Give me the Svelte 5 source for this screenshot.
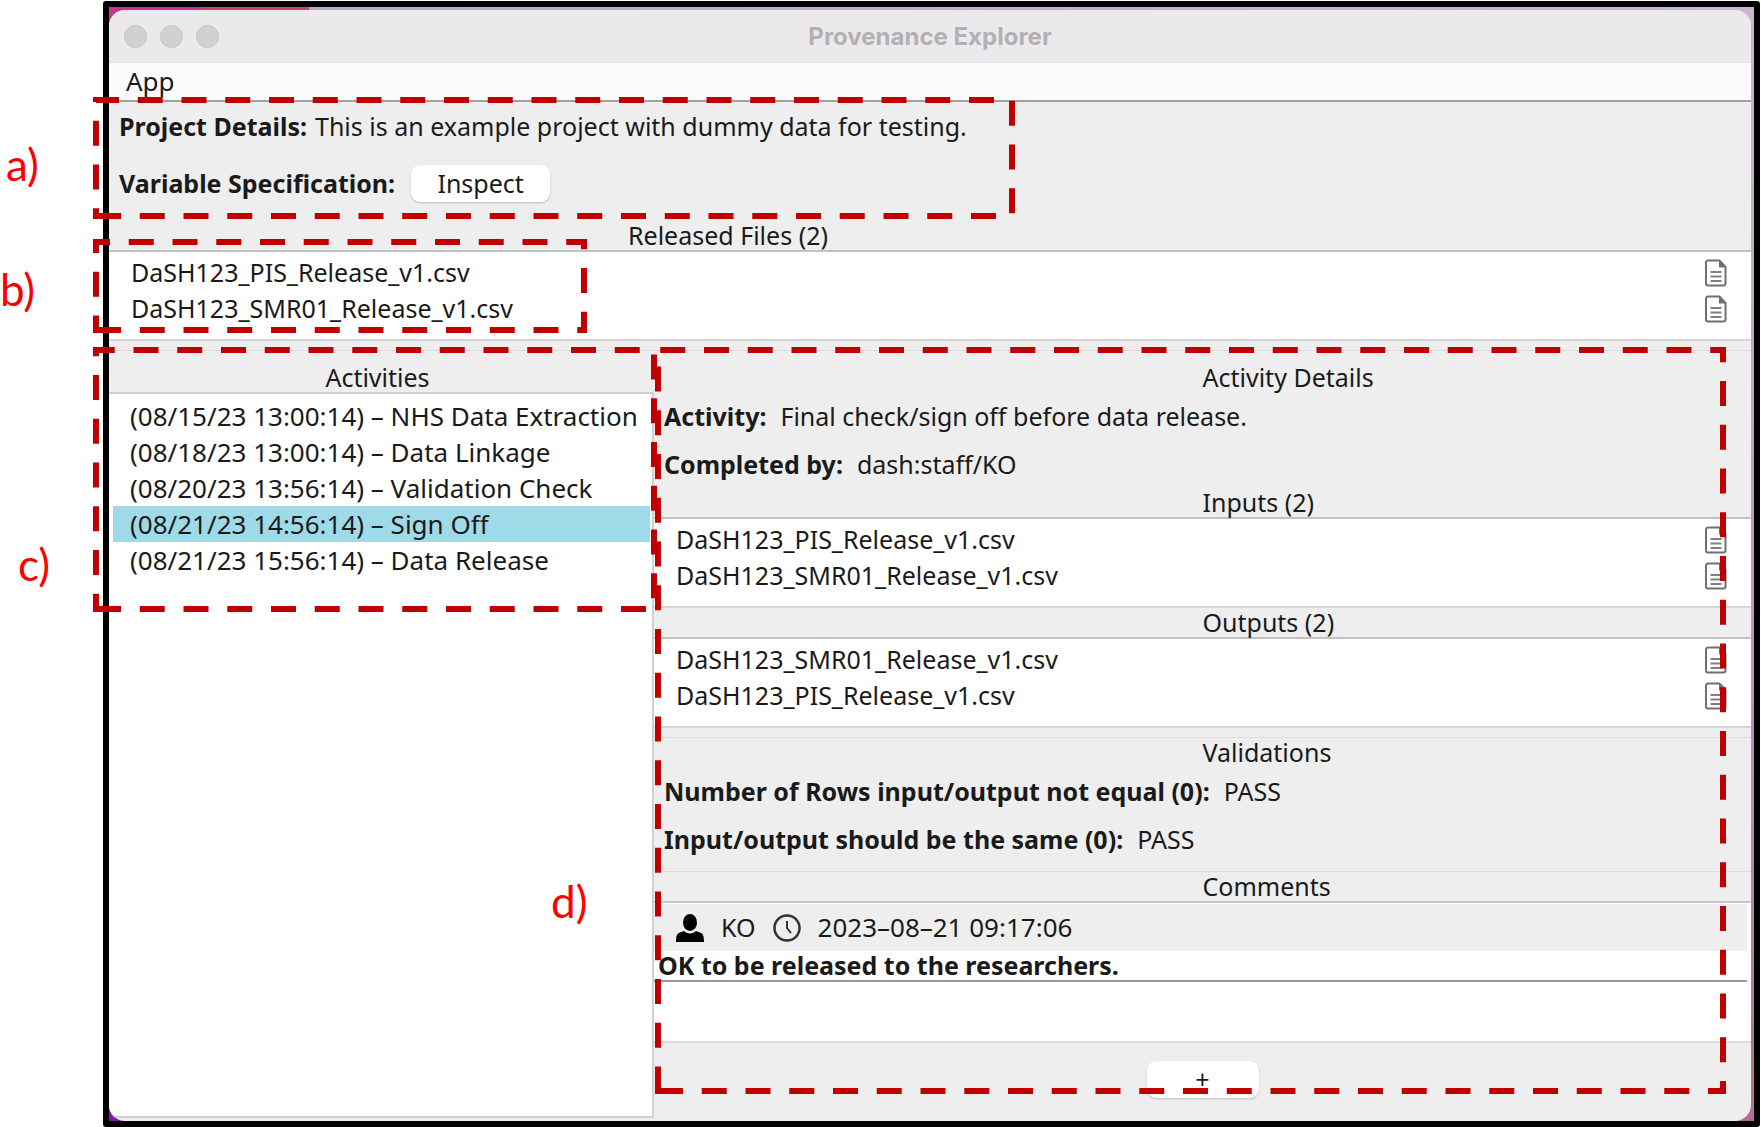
<script>
    const files = {
        pis: 'DaSH123_PIS_Release_v1.csv',
        smr: 'DaSH123_SMR01_Release_v1.csv'
    };

    const activities = [
        { time: '08/15/23 13:00:14', name: 'NHS Data Extraction' },
        { time: '08/18/23 13:00:14', name: 'Data Linkage' },
        { time: '08/20/23 13:56:14', name: 'Validation Check' },
        { time: '08/21/23 14:56:14', name: 'Sign Off' },
        { time: '08/21/23 15:56:14', name: 'Data Release' }
    ];

    const validations = [
        { name: 'Number of Rows input/output not equal (0):', result: 'PASS' },
        { name: 'Input/output should be the same (0):', result: 'PASS' }
    ];

    // callout outlines, drawn from the bottom left corner
    const outlines = [
        'M96 216 H1012 V100 H96 Z',
        'M96 330 H584 V242 H96 Z',
        'M96 609 H654 V350 H96 Z',
        'M658 1091 H1723 V350 H658 Z'
    ];

    let selected = $state(3);
</script>

{#snippet fileList(names)}
    <ul class="files">
        {#each names as name}
            <li>
                <span>{name}</span>
                <button class="doc" type="button" aria-label="Open {name}">
                    <svg width="22" height="28" viewBox="0 0 22 28">
                        <path d="M3 1.5h11.5l6 6.5v16.500a2 2 0 0 1-2 2h-15.500a2 2 0 0 1-2-2v-21a2 2 0 0 1 2-2z" fill="#fff" stroke="#707070" stroke-width="2" />
                        <path d="M14 1v7.500h7z" fill="#707070" />
                        <path d="M5.500 13h11M5.500 17.500h11M5.500 22h11" stroke="#808080" stroke-width="2" />
                    </svg>
                </button>
            </li>
        {/each}
    </ul>
{/snippet}

<main>
    <div class="frame">
        <div class="window">
            <header class="titlebar">
                <div class="lights">
                    <span></span>
                    <span></span>
                    <span></span>
                </div>
                <h1>Provenance Explorer</h1>
            </header>
            <nav class="menubar">
                <button type="button">App</button>
            </nav>

            <section class="project">
                <p class="line"><b>Project Details:</b> This is an example project with dummy data for testing.</p>
                <div class="line variable">
                    <b>Variable Specification:</b>
                    <button class="btn inspect" type="button">Inspect</button>
                </div>
            </section>

            <h2 class="released">Released Files (2)</h2>
            {@render fileList([files.pis, files.smr])}

            <div class="split">
                <section class="left">
                    <h2 class="top">Activities</h2>
                    <div class="activities">
                        {#each activities as activity, i}
                            <button type="button" class:selected={selected === i} onclick={() => (selected = i)}>
                                ({activity.time}) – {activity.name}
                            </button>
                        {/each}
                    </div>
                </section>

                <section class="right">
                    <h2 class="top">Activity Details</h2>
                    <p class="line wide"><b>Activity:</b><span>Final check/sign off before data release.</span></p>
                    <p class="line wide"><b>Completed by:</b><span>dash:staff/KO</span></p>

                    <h2>Inputs (2)</h2>
                    {@render fileList([files.pis, files.smr])}

                    <h2>Outputs (2)</h2>
                    {@render fileList([files.smr, files.pis])}

                    <div class="group validations">
                        <h2>Validations</h2>
                        {#each validations as check}
                            <p class="line wide"><b>{check.name}</b><span>{check.result}</span></p>
                        {/each}
                    </div>

                    <div class="group comments">
                        <h2>Comments</h2>
                        <div class="commentlist">
                            <article>
                                <div class="meta">
                                    <svg width="28" height="28" viewBox="0 0 28 28">
                                        <ellipse cx="14" cy="8.500" rx="7" ry="8.500" />
                                        <path d="M0 28c0-6 1-8.500 4-9.500l4-1.500c1.500 1.500 3.500 2.500 6 2.500s4.500-1 6-2.500l4 1.500c3 1 4 3.500 4 9.500z" />
                                    </svg>
                                    <span>KO</span>
                                    <svg width="28" height="28" viewBox="0 0 28 28" fill="none" stroke="#333">
                                        <circle cx="14" cy="14" r="12.500" stroke-width="2.500" />
                                        <path d="M14 7v7l4 5" stroke-width="2" />
                                    </svg>
                                    <time>2023–08–21 09:17:06</time>
                                </div>
                                <p>OK to be released to the researchers.</p>
                            </article>
                        </div>
                    </div>

                    <footer>
                        <button class="btn add" type="button" aria-label="Add comment">+</button>
                    </footer>
                </section>
            </div>
        </div>
    </div>

    <svg class="outlines" aria-hidden="true">
        {#each outlines as d}
            <path {d} />
        {/each}
    </svg>
    <span class="callout a">a)</span>
    <span class="callout b">b)</span>
    <span class="callout c">c)</span>
    <span class="callout d">d)</span>
</main>

<style>
    :global(body) {
        margin: 0;
        background: #fff;
    }

    main {
        position: relative;
        box-sizing: border-box;
        min-height: 100vh;
        padding: 1px 1px 0 103px;
        display: flex;
        font-family: "Noto Sans", sans-serif;
        font-size: 25px;
        line-height: 29px;
        color: #1a1a1a;
    }

    h1, h2, p, ul {
        margin: 0;
        padding: 0;
    }

    button {
        font: inherit;
        color: inherit;
        border: none;
        background: none;
        padding: 0;
        text-align: left;
    }

    .frame {
        flex: 1;
        display: flex;
        box-sizing: border-box;
        border: 6px solid #000;
        border-radius: 3px;
        padding: 3px 3px 0 0;
        background:
            linear-gradient(90deg, #c2388f 0 92px, #c04a72 92px 200px, #b3a9c5 200px, #c9b5d0) top / 100% 20px no-repeat,
            linear-gradient(90deg, #7a1fa0 0 30px, transparent 30px) bottom / 100% 30px no-repeat,
            linear-gradient(#c9b5d0, #c090c0 60%, #b5689a);
    }

    .window {
        flex: 1;
        display: flex;
        flex-direction: column;
        border-radius: 16px;
        overflow: hidden;
        background: #eee;
    }

    .titlebar {
        display: grid;
        grid-template-columns: 1fr auto 1fr;
        align-items: center;
        height: 52px;
        background: #ece9ec;
        border-bottom: 1px solid #e0dee0;
    }

    .titlebar h1 {
        font-family: Inter, sans-serif;
        font-size: 24px;
        font-weight: 700;
        color: #b2b0b3;
    }

    .lights {
        display: flex;
        gap: 13px;
        padding-left: 15px;
    }

    .lights span {
        box-sizing: border-box;
        width: 23px;
        height: 23px;
        border-radius: 50%;
        background: #d3d0d4;
        border: 1px solid #c6c3c7;
    }

    .menubar {
        height: 37px;
        padding-left: 17px;
        display: flex;
        align-items: center;
        font-size: 26px;
        background: #fbfbfb;
        border-bottom: 2px solid #a0a0a0;
    }

    .line {
        height: 48px;
        display: flex;
        align-items: center;
        gap: 8px;
    }

    .project {
        padding: 0 0 3px 10px;
    }

    .line.variable {
        height: 66px;
        padding-bottom: 2px;
        gap: 16px;
    }

    .line.wide {
        gap: 14px;
        padding-left: 10px;
    }

    .btn {
        height: 37px;
        text-align: center;
        background: #fff;
        border-radius: 9px;
        box-shadow: 0 1px 2px #bbb;
    }

    .inspect {
        width: 139px;
    }

    .add {
        width: 112px;
    }

    h2 {
        font-size: 25px;
        font-weight: 400;
        line-height: 29px;
    }

    .released {
        padding-left: 519px;
    }

    .files {
        list-style: none;
        background: #fff;
        border-top: 2px solid #c2c2c2;
        border-bottom: 2px solid #d6d6d6;
        padding: 3px 24px 12px 22px;
    }

    .files li {
        display: flex;
        align-items: center;
        justify-content: space-between;
        height: 36px;
    }

    .files span {
        padding-bottom: 2px;
    }

    .doc {
        display: flex;
    }

    .split {
        flex: 1;
        display: grid;
        grid-template-columns: 545px 1fr;
        margin-top: 9px;
        border-top: 1px solid #dcdcdc;
    }

    h2.top {
        padding-top: 12px;
    }

    .left {
        display: flex;
        flex-direction: column;
        padding-bottom: 3px;
    }

    .left h2 {
        text-align: center;
        padding-right: 8px;
    }

    .activities {
        flex: 1;
        display: flex;
        flex-direction: column;
        padding: 4px 2px 0 4px;
        font-size: 26px;
        background: #fff;
        border: 2px solid #d0d0d0;
        border-left: none;
    }

    .activities button {
        height: 36px;
        padding-left: 17px;
        white-space: nowrap;
    }

    .activities .selected {
        background: #9fdae8;
    }

    /* section titles start at the middle of the pane */
    .right h2 {
        padding-left: 50%;
    }

    .group {
        border-top: 1px solid #dcdcdc;
    }

    .validations {
        margin-top: 9px;
        padding-bottom: 8px;
    }

    .commentlist {
        height: 137px;
        padding: 1px 4px 0 0;
        background: #fff;
        border-top: 2px solid #c8c8c8;
        border-bottom: 2px solid #dcdcdc;
    }

    .commentlist article {
        border-bottom: 2px solid #989898;
    }

    .meta {
        display: flex;
        align-items: center;
        gap: 17px;
        height: 47px;
        padding-left: 22px;
        background: #eee;
    }

    .meta time {
        font-size: 26px;
    }

    .commentlist p {
        padding-left: 4px;
        font-weight: 700;
    }

    footer {
        display: flex;
        justify-content: center;
        padding-top: 18px;
    }

    .outlines {
        position: absolute;
        inset: 0;
        width: 100%;
        height: 100%;
        pointer-events: none;
        fill: none;
        stroke: #c00000;
        stroke-width: 6;
        stroke-dasharray: 25 18.75;
    }

    .callout {
        position: absolute;
        font-family: Lato, sans-serif;
        font-size: 44px;
        line-height: 48px;
        color: #f00;
    }

    .a {
        left: 6px;
        top: 140px;
    }

    .b {
        left: 0;
        top: 265px;
    }

    .c {
        left: 18px;
        top: 540px;
    }

    .d {
        left: 551px;
        top: 877px;
    }
</style>
